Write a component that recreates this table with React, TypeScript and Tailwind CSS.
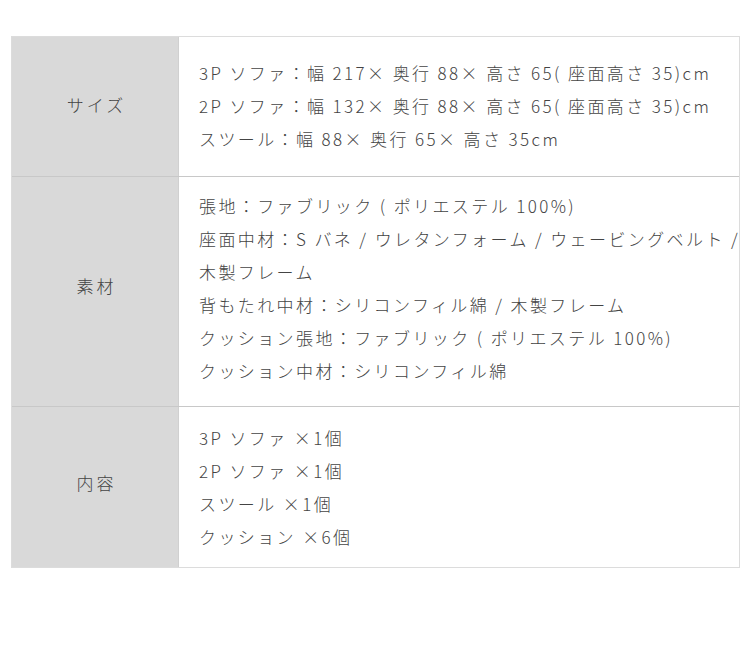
import React from "react";

const rows: { label: string; lines: string[]; h: string; lp: string; cp: string }[] = [
  {
    label: "サイズ",
    h: "h-[139px]",
    lp: "pb-[4px]",
    cp: "pb-[2px]",
    lines: [
      "3P ソファ：幅 217× 奥行 88× 高さ 65( 座面高さ 35)cm",
      "2P ソファ：幅 132× 奥行 88× 高さ 65( 座面高さ 35)cm",
      "スツール：幅 88× 奥行 65× 高さ 35cm",
    ],
  },
  {
    label: "素材",
    h: "h-[230px]",
    lp: "pb-[12px]",
    cp: "pb-[8px]",
    lines: [
      "張地：ファブリック ( ポリエステル 100%)",
      "座面中材：S バネ / ウレタンフォーム / ウェービングベルト /",
      "木製フレーム",
      "背もたれ中材：シリコンフィル綿 / 木製フレーム",
      "クッション張地：ファブリック ( ポリエステル 100%)",
      "クッション中材：シリコンフィル綿",
    ],
  },
  {
    label: "内容",
    h: "h-[161px]",
    lp: "pb-[8px]",
    cp: "pb-[0px]",
    lines: ["3P ソファ ×1個", "2P ソファ ×1個", "スツール ×1個", "クッション ×6個"],
  },
];

export default function App() {
  return (
    <div
      className="w-[750px] h-[653px] bg-white pt-[36px] pl-[11px]"
      style={{ fontFamily: '"Noto Sans CJK JP", "Noto Sans", sans-serif' }}
    >
      <div className="w-[729px] border border-[#dcdcdc] text-[#444] font-light">
        {rows.map((r, i) => (
          <div
            key={r.label}
            className={`flex ${r.h} ${i > 0 ? "border-t border-[#c8c8c8]" : ""}`}
          >
            <div
              className={`w-[167px] shrink-0 bg-[#d9d9d9] border-r border-[#d0d0d0] flex items-center justify-center text-[17px] tracking-[3px] pl-[3px] ${r.lp}`}
            >
              {r.label}
            </div>
            <div
              className={`flex-1 flex flex-col justify-center pl-[20px] text-[17px] leading-[33px] tracking-[2.4px] ${r.cp}`}
            >
              {r.lines.map((l) => (
                <div key={l} className="whitespace-nowrap">{l}</div>
              ))}
            </div>
          </div>
        ))}
      </div>
    </div>
  );
}
